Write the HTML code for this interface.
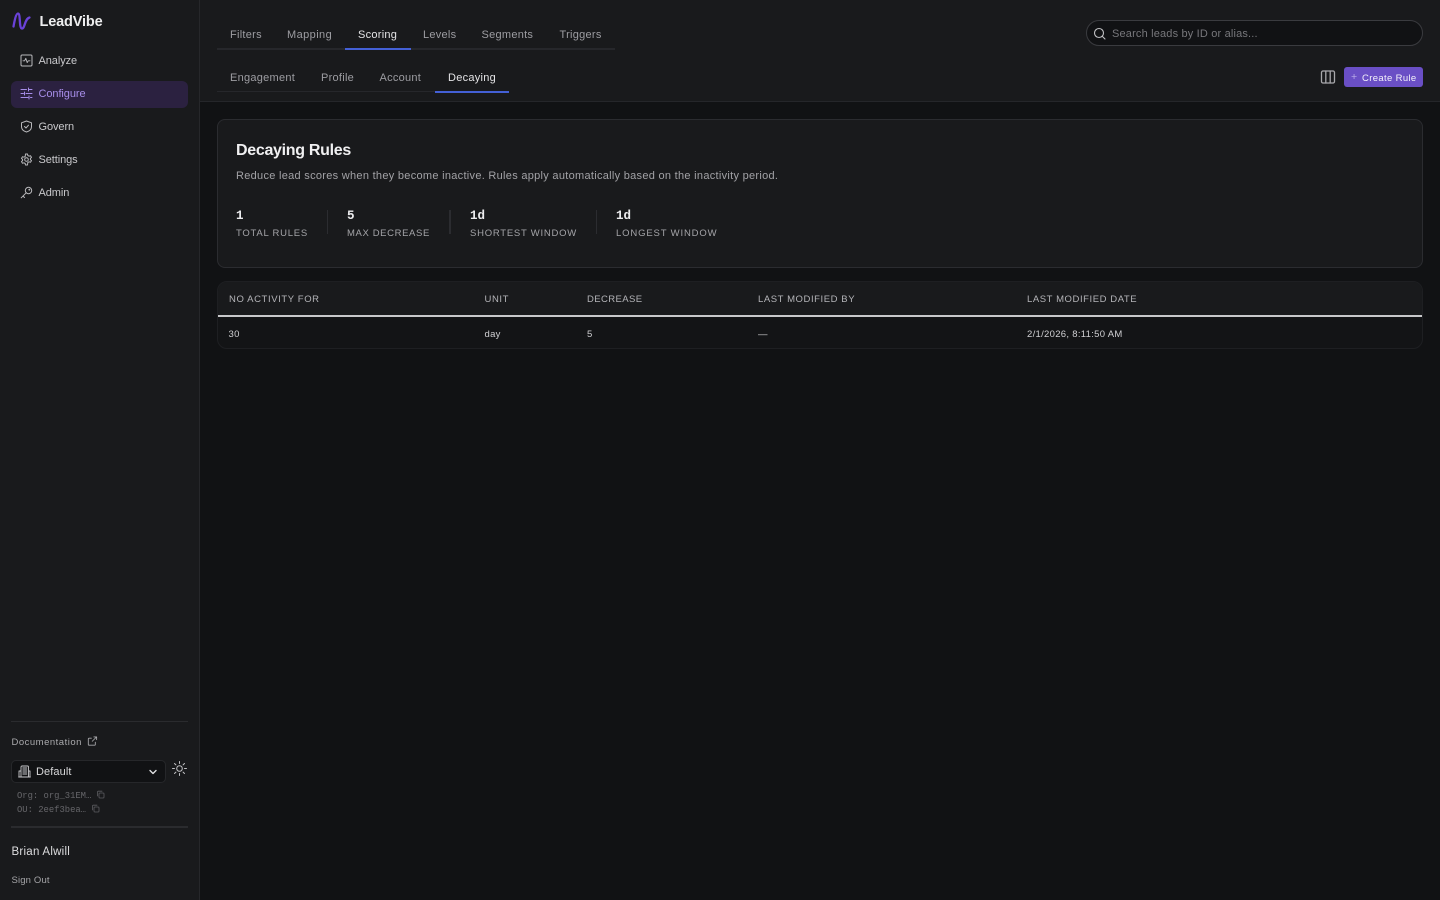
<!DOCTYPE html>
<html lang="en"><head><meta charset="utf-8"><title>LeadVibe</title>
<style>
*{box-sizing:border-box}
html,body{margin:0;padding:0;width:1440px;height:900px;overflow:hidden;background:#111214;font-family:"Liberation Sans",sans-serif;color:#e8e8ea}
.t{position:absolute;white-space:nowrap;line-height:1;transform:translateY(1px)}
.b{position:absolute}
svg{position:absolute;fill:none;stroke-linecap:round;stroke-linejoin:round}
.nav{font-size:11px;color:#c9c9cc;letter-spacing:-.08px}
.tab{font-size:11px;color:#9d9da2;letter-spacing:.27px}
.lab{font-size:9.5px;color:#a4a4a8;letter-spacing:.75px}
.val{font-family:"Liberation Mono",monospace;font-size:12.5px;font-weight:700;color:#ececee}
.th{font-size:9.5px;font-weight:400;color:#b4b4b8;letter-spacing:.6px}
.td{font-size:9.5px;color:#d0d0d3;letter-spacing:.3px}
.mono{font-family:"Liberation Mono",monospace;font-size:8.85px;color:#66666a}
</style></head><body>
<div class="b" style="left:0;top:0;width:200px;height:900px;background:#191a1c;border-right:1px solid #26272a"></div>
<div class="b" style="left:200px;top:0;width:1240px;height:102px;background:#191a1c;border-bottom:1px solid #25262a"></div>

<svg style="left:11px;top:11px" width="21" height="20" viewBox="0 0 21 20"><path d="M2.500 15.500C3.500 10 5 2.500 7 2.500 9.800 2.500 7.800 17.500 11 17.500 14 17.500 13.500 8 18.500 6.500" stroke="#6a42d8" stroke-width="2.300"/></svg>
<div class="t" style="left:39.5px;top:14px;font-size:14.5px;font-weight:700;color:#eeeeef;letter-spacing:-.15px">LeadVibe</div>

<div class="b" style="left:11px;top:81px;width:177px;height:27px;border-radius:6px;background:#2b2140"></div>
<svg style="left:20px;top:54px" width="13" height="13" viewBox="0 0 13 13" stroke="#b9b9bc"><rect x="1" y="1" width="11" height="11" rx="1.2"/><path d="M3 6.8h1.6l1.2-2.5 1.4 4.3 1-1.8H10" stroke-width=".9"/></svg>
<div class="t nav" style="left:38.5px;top:55px">Analyze</div>
<svg style="left:20px;top:87px" width="13" height="13" viewBox="0 0 13 13" stroke="#a68de8"><path d="M1 2.500h5.500M9 2.500h3M8.500 1v3M1 6.500h2.500M6 6.500h6M4.500 5v3M1 10.500h7M10.500 10.500H12M9 9v3"/></svg>
<div class="t nav" style="left:38.5px;top:88px;color:#a68de8">Configure</div>
<svg style="left:20px;top:120px" width="13" height="13" viewBox="0 0 13 13" stroke="#b9b9bc"><path d="M6.500 1 11.500 2.800V6.500C11.500 9.500 9 11.300 6.500 12 4 11.300 1.500 9.500 1.500 6.500V2.800Z"/><path d="M4.500 6.500 6 8 8.500 5.200"/></svg>
<div class="t nav" style="left:38.5px;top:121px">Govern</div>
<svg style="left:20px;top:153px" width="13" height="13" viewBox="0 0 13 13" stroke="#b9b9bc"><circle cx="6.500" cy="6.500" r="1.800"/><path d="M5.500 1h2l.3 1.500 1.300.7 1.400-.5 1 1.700-1.100 1v1.200l1.100 1-1 1.700-1.400-.5-1.300.7L7.500 12h-2l-.3-1.500-1.300-.7-1.400.5-1-1.700 1.100-1V6.400l-1.100-1 1-1.700 1.400.5 1.300-.7Z"/></svg>
<div class="t nav" style="left:38.5px;top:154px">Settings</div>
<svg style="left:20px;top:186px" width="13" height="13" viewBox="0 0 13 13" stroke="#b9b9bc"><circle cx="8.500" cy="4.500" r="3.200"/><path d="M6.200 6.800 1.200 11.800M3 10l1.500 1.500"/><circle cx="9.300" cy="3.700" r=".4"/></svg>
<div class="t nav" style="left:38.5px;top:187px">Admin</div>

<div class="b" style="left:11px;top:721px;width:177px;height:1px;background:#2a2b2e"></div>
<div class="t" style="left:11.500px;top:737px;font-size:9.500px;color:#aaaaad;letter-spacing:.5px">Documentation</div>
<svg style="left:87px;top:736px" width="10.500" height="10.500" viewBox="0 0 12 12" stroke="#a8a8ab"><path d="M5 2.500H2.500a1 1 0 0 0-1 1V9.500a1 1 0 0 0 1 1H8.500a1 1 0 0 0 1-1V7M6 6l5-5M7.800 1H11v3.200"/></svg>
<div class="b" style="left:11px;top:760px;width:155px;height:23px;border-radius:5px;background:#111214;border:1px solid #26272a"></div>
<svg style="left:18px;top:765px" width="13" height="13" viewBox="0 0 13 13" stroke="#c8c8cb" stroke-width=".9"><path d="M3 12V2a1 1 0 0 1 1-1h5.500a1 1 0 0 1 1 1v10M3 6H1v6M10.500 6H12v6M.6 12h11.800M4.800 3h4M4.800 5h4M4.800 7h4M4.800 9h4"/></svg>
<div class="t" style="left:36px;top:766px;font-size:11px;color:#d8d8da;letter-spacing:.1px">Default</div>
<svg style="left:148px;top:767px" width="10" height="10" viewBox="0 0 10 10" stroke="#e0e0e2" stroke-width="1.400"><path d="M2 3.500 5 6.500 8 3.500"/></svg>
<svg style="left:172px;top:761px" width="15" height="15" viewBox="0 0 15 15" stroke="#c0c0c3"><circle cx="7.500" cy="7.500" r="2.800"/><path d="M7.500.5v2M7.500 12.500v2M.5 7.500h2M12.500 7.500h2M2.500 2.500 3.900 3.900M11.100 11.100 12.500 12.500M2.500 12.500 3.900 11.100M11.100 3.900 12.500 2.500"/></svg>
<div class="t mono" style="left:17px;top:791px">Org: org_31EM…</div>
<svg style="left:96px;top:790px" width="9" height="9" viewBox="0 0 9 9" stroke="#5d5d61" stroke-width=".8"><rect x="3" y="3" width="5" height="5" rx=".8"/><path d="M1.500 6V2a.8.8 0 0 1 .8-.8H6"/></svg>
<div class="t mono" style="left:17px;top:805px">OU: 2eef3bea…</div>
<svg style="left:90.500px;top:804px" width="9" height="9" viewBox="0 0 9 9" stroke="#5d5d61" stroke-width=".8"><rect x="3" y="3" width="5" height="5" rx=".8"/><path d="M1.500 6V2a.8.8 0 0 1 .8-.8H6"/></svg>
<div class="b" style="left:11px;top:826px;width:177px;height:2px;background:#2a2b2e"></div>
<div class="t" style="left:11.500px;top:846px;font-size:11.500px;color:#dddddf;letter-spacing:.25px">Brian Alwill</div>
<div class="t" style="left:11.500px;top:875px;font-size:9.500px;color:#a4a4a7;letter-spacing:.15px">Sign Out</div>

<div class="b" style="left:217px;top:48px;width:398px;height:2px;background:#26272b"></div>
<div class="b" style="left:345px;top:47.500px;width:66px;height:2px;background:#4460d6"></div>
<div class="t tab" style="left:230px;top:29px">Filters</div>
<div class="t tab" style="left:287px;top:29px;letter-spacing:.42px">Mapping</div>
<div class="t tab" style="left:358px;top:29px;color:#e4e4e6">Scoring</div>
<div class="t tab" style="left:423px;top:29px">Levels</div>
<div class="t tab" style="left:481.500px;top:29px">Segments</div>
<div class="t tab" style="left:559.500px;top:29px">Triggers</div>
<div class="b" style="left:217px;top:91px;width:292px;height:1px;background:#26272b"></div>
<div class="b" style="left:435px;top:91px;width:74px;height:2px;background:#4460d6"></div>
<div class="t tab" style="left:230px;top:72px">Engagement</div>
<div class="t tab" style="left:321px;top:72px">Profile</div>
<div class="t tab" style="left:379.500px;top:72px">Account</div>
<div class="t tab" style="left:448px;top:72px;color:#e4e4e6">Decaying</div>

<div class="b" style="left:1086px;top:20px;width:337px;height:26px;border-radius:13px;background:#111214;border:1px solid #3a3b3f"></div>
<svg style="left:1093px;top:26.500px" width="13" height="13" viewBox="0 0 13 13" stroke="#c0c0c3" stroke-width="1.100"><circle cx="6" cy="6" r="4.500"/><path d="M9.500 9.500 12 12"/></svg>
<div class="t" style="left:1112px;top:28px;font-size:11px;color:#77777b;letter-spacing:.17px">Search leads by ID or alias...</div>
<svg style="left:1320px;top:69px" width="16" height="16" viewBox="0 0 16 16" stroke="#a8a8ab" stroke-width="1.300"><rect x="1.500" y="2" width="13" height="12" rx="1.500"/><path d="M5.800 2v12M10.200 2v12"/></svg>
<div class="b" style="left:1344px;top:67px;width:79px;height:20px;border-radius:3px;background:#6a4fc5"></div>
<div class="t" style="left:1351px;top:72px;font-size:10.500px;color:#bcaee8;line-height:9px">+</div>
<div class="t" style="left:1362px;top:73px;font-size:9.500px;color:#f4f2fb;letter-spacing:.35px">Create Rule</div>

<div class="b" style="left:217px;top:119px;width:1206px;height:149px;border-radius:8px;background:#191a1c;border:1px solid #2b2c30"></div>
<div class="t" style="left:236px;top:142px;font-size:16px;font-weight:700;color:#f0f0f1;letter-spacing:-.3px">Decaying Rules</div>
<div class="t" style="left:236px;top:170px;font-size:11px;color:#a2a2a6;letter-spacing:.29px">Reduce lead scores when they become inactive. Rules apply automatically based on the inactivity period.</div>
<div class="t val" style="left:236px;top:209px">1</div>
<div class="t lab" style="left:236px;top:228px">TOTAL RULES</div>
<div class="b" style="left:327px;top:210px;width:1px;height:24px;background:#2b2c30"></div>
<div class="t val" style="left:347px;top:209px">5</div>
<div class="t lab" style="left:347px;top:228px;letter-spacing:.62px">MAX DECREASE</div>
<div class="b" style="left:449px;top:210px;width:2px;height:24px;background:#2b2c30"></div>
<div class="t val" style="left:470px;top:209px">1d</div>
<div class="t lab" style="left:470px;top:228px">SHORTEST WINDOW</div>
<div class="b" style="left:596px;top:210px;width:1px;height:24px;background:#2b2c30"></div>
<div class="t val" style="left:616px;top:209px">1d</div>
<div class="t lab" style="left:616px;top:228px;letter-spacing:.85px">LONGEST WINDOW</div>

<div class="b" style="left:217px;top:281px;width:1206px;height:68px;border-radius:10px;border:1px solid #1e1f22;background:#131416;overflow:hidden">
<div class="b" style="left:0;top:0;width:1206px;height:33px;background:#191a1c"></div>
<div class="b" style="left:0;top:33px;width:1206px;height:2px;background:#c8c8ca"></div>
</div>
<div class="t th" style="left:229px;top:294px">NO ACTIVITY FOR</div>
<div class="t th" style="left:484.500px;top:294px">UNIT</div>
<div class="t th" style="left:587px;top:294px;letter-spacing:.4px">DECREASE</div>
<div class="t th" style="left:758px;top:294px;letter-spacing:.57px">LAST MODIFIED BY</div>
<div class="t th" style="left:1027px;top:294px;letter-spacing:.57px">LAST MODIFIED DATE</div>
<div class="t td" style="left:228.500px;top:329px">30</div>
<div class="t td" style="left:484.500px;top:329px">day</div>
<div class="t td" style="left:587px;top:329px">5</div>
<div class="t td" style="left:758px;top:329px">—</div>
<div class="t td" style="left:1027px;top:329px">2/1/2026, 8:11:50 AM</div>
</body></html>
